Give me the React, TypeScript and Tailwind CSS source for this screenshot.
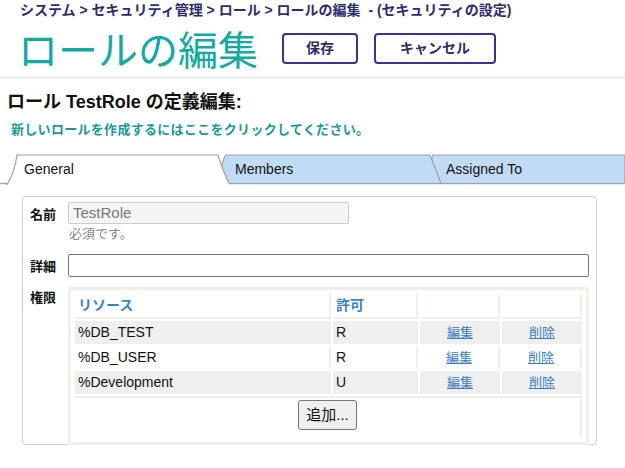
import React from "react";

const FONT = "font-['Liberation_Sans','Noto_Sans_CJK_JP',sans-serif]";

const rows = [
  { name: "%DB_TEST", perm: "R", shade: true },
  { name: "%DB_USER", perm: "R", shade: false },
  { name: "%Development", perm: "U", shade: true },
];

const TabStrip = () => (
  <div className="relative h-[32px] mt-[14px]">
    <svg className="absolute inset-0" width="625" height="32" viewBox="0 0 625 32">
      <line x1="0" y1="30.5" x2="625" y2="30.5" stroke="#a8a8a8" strokeWidth="1.5" />
      <path d="M433 2 Q427 14 438 30.5 L625 30.5 L625 2 Z" fill="#c2dbf5" stroke="#a0a0a0" strokeWidth="1.2" />
      <path d="M226 2 Q217 15 228 30.5 L441 30.5 Q435 14 430 2 Z" fill="#c2dbf5" stroke="#a0a0a0" strokeWidth="1.2" />
      <path d="M7 32 Q15 18 17 2 L218 2 Q222 16 229 30.5 L229 32 Z" fill="#ffffff" />
      <path d="M7 32 Q15 18 17 2 L218 2 Q222 16 229 30.5" fill="none" stroke="#a0a0a0" strokeWidth="1.2" />
    </svg>
    <div className="relative flex h-full items-center text-[14px] text-[#111]">
      <span className="ml-[24px] w-[211px]">General</span>
      <span className="w-[211px]">Members</span>
      <span>Assigned To</span>
    </div>
  </div>
);

export default function App() {
  return (
    <div className={`${FONT} w-[625px] h-[468px] bg-white overflow-hidden`}>
      <div className="border-b-[3px] border-[#eeeeee] h-[79px]">
        <div className="pl-[20px] h-[22px] text-[14px] font-semibold text-[#2d2d6b] whitespace-pre">
          システム &gt; セキュリティ管理 &gt; ロール &gt; ロールの編集  - (セキュリティの設定)
        </div>
        <div className="flex items-center pl-[18px] h-[54px] pb-[2px]">
          <span className="text-[40px] leading-none text-[#14aaa2] font-['Noto_Sans_CJK_JP',sans-serif]">
            ロールの編集
          </span>
          <button className="ml-[24px] w-[76px] h-[31px] border-2 border-[#333399] rounded-[4px] text-[14px] font-semibold text-[#2d2d6b]">
            保存
          </button>
          <button className="ml-[16px] w-[122px] h-[31px] border-2 border-[#333399] rounded-[4px] text-[14px] font-semibold text-[#2d2d6b]">
            キャンセル
          </button>
        </div>
      </div>

      <div className="mt-[12px] pl-[7px] h-[22px] text-[18px] leading-[22px] font-bold text-[#111]">
        ロール TestRole の定義編集:
      </div>
      <div className="mt-[8px] pl-[11px] h-[18px] text-[13px] leading-[18px] tracking-[0.3px] font-semibold text-[#1b9a95]">
        新しいロールを作成するにはここをクリックしてください。
      </div>

      <TabStrip />

      <div className="ml-[22px] mt-[11px] w-[575px] h-[249px] border border-[#cccccc] rounded-[4px] pt-[5px] pl-[7px]">
        <div className="flex">
          <div className="w-[38px] pt-[3px] text-[13px] font-bold text-[#111]">名前</div>
          <div>
            <div className="w-[281px] h-[22px] bg-[#f5f5f5] border border-[#cccccc] rounded-[2px] px-[4px] text-[15px] leading-[20px] text-[#777]">
              TestRole
            </div>
            <div className="h-[20px] pl-[1px] text-[13px] leading-[20px] text-[#888]">必須です。</div>
          </div>
        </div>

        <div className="flex mt-[10px]">
          <div className="w-[38px] pt-[3px] text-[13px] font-bold text-[#111]">詳細</div>
          <div className="w-[521px] h-[23px] border border-[#767676] rounded-[2px]" />
        </div>

        <div className="flex mt-[10px]">
          <div className="w-[38px] pt-[1px] text-[13px] font-bold text-[#111]">権限</div>
          <div className="w-[521px] border-[3px] border-[#f0f0e7] p-[2px]">
            <table className="border-separate border-spacing-[2px] w-full table-fixed text-[14px] text-[#111]">
              <colgroup>
                <col className="w-[256px]" />
                <col className="w-[85px]" />
                <col className="w-[80px]" />
                <col />
              </colgroup>
              <thead>
                <tr className="h-[25px]">
                  <th className="text-left pl-[3px] font-bold text-[#3b84c4] border-r-2 border-b-2 border-[#efefe7]">リソース</th>
                  <th className="text-left pl-[3px] font-bold text-[#3b84c4] border-r-2 border-b-2 border-[#efefe7]">許可</th>
                  <th className="border-r-2 border-b-2 border-[#efefe7]" />
                  <th className="border-r-2 border-b-2 border-[#efefe7]" />
                </tr>
              </thead>
              <tbody>
                {rows.map((r) => (
                  <tr key={r.name} className="h-[23px]">
                    <td className={`pl-[3px] ${r.shade ? "bg-[#efefef]" : "bg-white border-r-2 border-[#efefe7]"}`}>{r.name}</td>
                    <td className={`pl-[3px] ${r.shade ? "bg-[#efefef]" : "bg-white border-r-2 border-[#efefe7]"}`}>{r.perm}</td>
                    <td className={`text-center text-[13px] ${r.shade ? "bg-[#efefef]" : "bg-white border-r-2 border-[#efefe7]"}`}>
                      <a className="text-[#3b7cc4] underline">編集</a>
                    </td>
                    <td className={`text-center text-[13px] ${r.shade ? "bg-[#efefef]" : "bg-white border-r-2 border-[#efefe7]"}`}>
                      <a className="text-[#3b7cc4] underline">削除</a>
                    </td>
                  </tr>
                ))}
                <tr className="h-[42px]">
                  <td colSpan={4} className="text-center align-top pt-[2px] border-r-2 border-t-2 border-[#efefe7]">
                    <button className="w-[59px] h-[30px] bg-[#efefef] border border-[#767676] rounded-[3px] text-[15px] text-[#111]">
                      追加...
                    </button>
                  </td>
                </tr>
              </tbody>
            </table>
          </div>
        </div>
      </div>
    </div>
  );
}
